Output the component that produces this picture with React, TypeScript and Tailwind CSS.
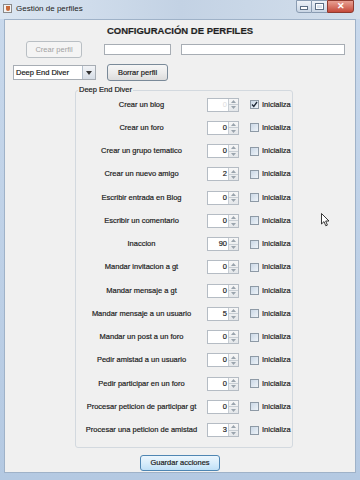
import React from 'react';

const acciones = [
  { label: 'Crear un blog', value: '0', checked: true, disabled: true },
  { label: 'Crear un foro', value: '0' },
  { label: 'Crear un grupo tematico', value: '0' },
  { label: 'Crear un nuevo amigo', value: '2' },
  { label: 'Escribir entrada en Blog', value: '0' },
  { label: 'Escribir un comentario', value: '0' },
  { label: 'Inaccion', value: '90' },
  { label: 'Mandar invitacion a gt', value: '0' },
  { label: 'Mandar mensaje a gt', value: '0' },
  { label: 'Mandar mensaje a un usuario', value: '5' },
  { label: 'Mandar un post a un foro', value: '0' },
  { label: 'Pedir amistad a un usuario', value: '0' },
  { label: 'Pedir participar en un foro', value: '0' },
  { label: 'Procesar peticion de participar gt', value: '0' },
  { label: 'Procesar una peticion de amistad', value: '3' },
];

const Arrow = ({ up }: { up?: boolean }) => (
  <svg width="5" height="3" viewBox="0 0 5 3">
    <path d={up ? 'M0 3 L2.5 0 L5 3 Z' : 'M0 0 L2.5 3 L5 0 Z'} fill="#9aa4ad" />
  </svg>
);

const Spinner = ({ value, disabled }: { value: string; disabled?: boolean }) => (
  <div className="flex h-[14px] w-[32px] border border-[#b5bcc4] bg-white">
    <div
      className={`flex-1 pr-[1px] text-right text-[7.5px] leading-[12px] ${
        disabled ? 'text-[#dcdcdc] [-webkit-text-stroke:0px]' : 'text-[#111]'
      }`}
    >
      {value}
    </div>
    <div className="flex w-[10px] flex-col border-l border-[#c8ced4] bg-gradient-to-b from-[#f7f7f7] to-[#e4e7ea]">
      <div className="flex flex-1 items-center justify-center border-b border-[#c8ced4]">
        <Arrow up />
      </div>
      <div className="flex flex-1 items-center justify-center">
        <Arrow />
      </div>
    </div>
  </div>
);

const Checkbox = ({ checked }: { checked?: boolean }) => (
  <div className="flex h-[9px] w-[9px] items-center justify-center border border-[#8e9aa6] bg-gradient-to-br from-[#cbd8e6] to-[#eef3f8]">
    {checked && (
      <svg width="7" height="7" viewBox="0 0 7 7">
        <path d="M1 3.5 L2.8 5.5 L6 1" stroke="#1f2a38" strokeWidth="1.3" fill="none" />
      </svg>
    )}
  </div>
);

const Cursor = () => (
  <svg
    className="absolute left-[321px] top-[213px]"
    width="9"
    height="14"
    viewBox="0 0 9 14"
  >
    <path
      d="M0.5 0.5 L0.5 11 L3 8.6 L4.8 12.8 L6.4 12.1 L4.7 8 L8 8 Z"
      fill="#fff"
      stroke="#222"
      strokeWidth="0.9"
    />
  </svg>
);

export default function App() {
  return (
    <div
      className="relative flex h-[480px] w-[360px] flex-col bg-gradient-to-b from-[#c9d9ec] to-[#b4c9e2] px-[4px] pb-[7px] text-[#111] [-webkit-text-stroke:0.2px_#333]"
      style={{ fontFamily: '"Liberation Sans", Arial, sans-serif' }}
    >
      {/* barra de titulo */}
      <div className="-mx-[4px] flex h-[19px] items-start bg-gradient-to-r from-[#dbe6f2] via-[#c3d2e4] to-[#d3dfec]">
        <div className="ml-[3px] mt-[4px] flex h-[9px] w-[9px] items-center justify-center border border-[#8a8a8a] bg-[#f3f3f3]">
          <div className="h-[5px] w-[4px] rounded-b-[2px] bg-[#c96a3a]" />
        </div>
        <div className="ml-[4px] mt-[3px] text-[8px] leading-[11px] text-[#222] [-webkit-text-stroke:0px]">Gestión de perfiles</div>
        <div className="ml-auto mr-[6px] flex h-[13px]">
          <div className="flex w-[16px] items-center justify-center rounded-bl-[3px] border border-[#8a9cb2] bg-gradient-to-b from-[#eef2f8] to-[#c8d5e4]">
            <div className="mt-[3px] h-[2px] w-[6px] bg-white shadow-[0_0_0_1px_#5d6f85]" />
          </div>
          <div className="flex w-[15px] items-center justify-center border-y border-[#8a9cb2] bg-gradient-to-b from-[#eef2f8] to-[#c8d5e4]">
            <div className="h-[5px] w-[7px] border border-white shadow-[0_0_0_1px_#5d6f85]" />
          </div>
          <div className="flex w-[27px] items-center justify-center rounded-br-[3px] border border-[#8e3a2f] bg-gradient-to-b from-[#e8a093] to-[#c4483a] text-[9px] font-bold leading-none text-white [-webkit-text-stroke:0px]">
            ✕
          </div>
        </div>
      </div>

      {/* contenido */}
      <div className="flex flex-1 flex-col border border-[#9fb2c8] bg-[#f0f0f0]">
        <div className="mt-[5px] h-[12px] text-center text-[9.5px] font-bold leading-[12px] text-[#1e1e1e]">
          CONFIGURACIÓN DE PERFILES
        </div>

        <div className="mt-[4px] flex h-[17px] items-center">
          <button className="ml-[21px] h-[17px] w-[56px] rounded-[3px] border border-[#b9bfc4] bg-[#f4f4f4] text-[7.5px] text-[#a2a2a2] [-webkit-text-stroke:0px]">
            Crear perfil
          </button>
          <div className="ml-[22px] h-[11px] w-[67px] border border-[#a7adb4] bg-white" />
          <div className="ml-[10px] h-[11px] w-[164px] border border-[#a7adb4] bg-white" />
        </div>

        <div className="mt-[6px] flex h-[17px] items-center">
          <div className="ml-[8px] flex h-[15px] w-[83px] border border-[#a7adb4] bg-white">
            <div className="flex-1 pl-[2px] text-[7.5px] leading-[13px]">Deep End Diver</div>
            <div className="flex w-[13px] items-center justify-center border-l border-[#b5c0cc] bg-gradient-to-b from-[#f2f4f7] to-[#d6dde6]">
              <svg width="6" height="4" viewBox="0 0 6 4">
                <path d="M0 0 L3 4 L6 0 Z" fill="#333" />
              </svg>
            </div>
          </div>
          <button className="ml-[11px] h-[17px] w-[61px] rounded-[3px] border border-[#7a8a99] bg-gradient-to-b from-[#f6f6f6] via-[#ececec] to-[#dcdcdc] text-[7.5px]">
            Borrar perfil
          </button>
        </div>

        <fieldset className="ml-[70px] mt-[5px] w-[218px] rounded-[3px] border border-[#d3d9df] pb-[5px]">
          <legend className="ml-[2px] px-[1px] text-[7.5px] leading-[8px]">Deep End Diver</legend>
          <div className="-mt-[1px] flex flex-col">
            {acciones.map((a) => (
              <div key={a.label} className="flex h-[23.25px] items-center">
                <div className="w-[131px] text-center text-[7.5px] leading-[10px]">{a.label}</div>
                <Spinner value={a.value} disabled={a.disabled} />
                <div className="ml-[11px]">
                  <Checkbox checked={a.checked} />
                </div>
                <div className="ml-[3px] text-[7.5px] leading-[10px]">Inicializa</div>
              </div>
            ))}
          </div>
        </fieldset>

        <button className="mx-auto mt-[7px] h-[16px] w-[80px] rounded-[3px] border border-[#4f86b3] bg-gradient-to-b from-[#ecf6fd] via-[#d8edfb] to-[#bfe0f7] text-[7.5px]">
          Guardar acciones
        </button>
      </div>

      <Cursor />
    </div>
  );
}
